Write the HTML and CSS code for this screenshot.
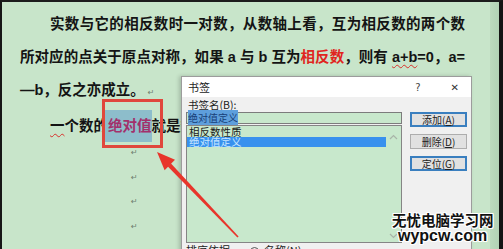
FILE: index.html
```html
<!DOCTYPE html>
<html lang="zh-CN">
<head>
    <meta charset="UTF-8">
    <title>书签</title>
    <link rel="stylesheet" href="styles.css">
</head>
<body>
    <div class="screen">
        <div class="page">
            <div class="doc">
                <p class="line first full">实数与它的相反数时一对数，从数轴上看，互为相反数的两个数</p>
                <p class="line full">所对应的点关于原点对称，如果 a 与 b 互为<span class="red">相反数</span>，则有 <span class="wavy">a+b</span>=0，a=</p>
                <p class="line">—b，反之亦成立。<span class="mark">↵</span></p>
                <p class="line first second"><span class="wavy">一</span>个数的<span class="sel">绝对值</span>就是数轴上表示这个数的点到原点的距离。</p>
                <p class="empty">↵</p>
                <p class="empty">↵</p>
                <p class="empty">↵</p>
                <p class="empty">↵</p>
            </div>
            <div class="edge"></div>
        </div>

        <!-- 红框标注 -->
        <div class="frame"></div>

        <!-- 书签对话框 -->
        <div class="dialog">
            <div class="title">
                <span class="title-text">书签</span>
                <span class="help">?</span>
                <span class="close">✕</span>
            </div>
            <div class="dialog-body">
                <div class="left">
                    <div class="label">书签名(<u>B</u>):</div>
                    <div class="input"><span class="input-sel">绝对值定义</span></div>
                    <div class="list">
                        <div class="items">
                            <div class="item">相反数性质</div>
                            <div class="item active">绝对值定义</div>
                        </div>
                        <div class="scroll">
                            <svg width="9" height="6" viewBox="0 0 9 6"><path d="M1 5 L4.5 1.5 L8 5" fill="none" stroke="#a8b4a8" stroke-width="1.2"/></svg>
                            <svg width="9" height="6" viewBox="0 0 9 6"><path d="M1 1 L4.5 4.5 L8 1" fill="none" stroke="#a8b4a8" stroke-width="1.2"/></svg>
                        </div>
                    </div>
                    <div class="sort">排序依据: <span class="radio"></span> 名称(<u>N</u>)</div>
                </div>
                <div class="buttons">
                    <button class="btn focus">添加(<u>A</u>)</button>
                    <button class="btn">删除(<u>D</u>)</button>
                    <button class="btn focus">定位(<u>G</u>)</button>
                </div>
            </div>
        </div>

        <!-- 红色箭头 -->
        <svg class="arrow" width="503" height="249" viewBox="0 0 503 249">
            <polygon points="237.4,237.6 238.6,236.4 171,163.4 167.8,166.6" fill="#e8352b"/>
            <polygon points="157,152 175,159.8 164.6,170.2" fill="#e8352b"/>
        </svg>

        <div class="watermark">
            <div class="wm-cn">无忧电脑学习网</div>
            <div class="wm-en">wypcw.com</div>
        </div>
    </div>
</body>
</html>
```

FILE: styles.css
```css
* {
    margin: 0;
    padding: 0;
    box-sizing: border-box;
}

body {
    width: 503px;
    height: 249px;
    overflow: hidden;
    background: #111;
    font-family: "Noto Sans CJK SC", sans-serif;
}

.screen {
    position: relative;
    width: 503px;
    height: 249px;
    overflow: hidden;
    border-left: 2px solid #161616;
    border-top: 2px solid #1c1c1c;
    border-right: 4px solid #141414;
}

.page {
    display: flex;
    height: 100%;
}

.doc {
    width: 488px;
    height: 100%;
    background: #c8e5ca;
    padding: 6px 25px 0 18px;
    color: #141414;
    font-size: 14.5px;
    font-weight: bold;
    font-family: "Liberation Sans", "Noto Sans CJK SC", sans-serif;
}

.edge {
    flex: 1;
    background: linear-gradient(90deg, #bcdabe, #b2d2b5);
}

.line {
    height: 33px;
    line-height: 33px;
    white-space: nowrap;
}

.first {
    text-indent: 30px;
}

.full {
    text-align: justify;
    text-align-last: justify;
}

.second {
    margin-top: 4px;
    height: 30px;
    line-height: 30px;
}

.red {
    color: #e0261e;
}

.wavy {
    text-decoration: underline wavy #d8302a;
    text-decoration-thickness: 1px;
    text-underline-offset: 2px;
}

.sel {
    color: #a3306b;
    background: #8dbdcb;
    padding: 8px 0 8px 3px;
    margin-left: -3px;
}

.mark {
    font-family: "DejaVu Sans", sans-serif;
    font-size: 8px;
    font-weight: normal;
    color: #6f7f70;
    margin-left: 3px;
}

.empty {
    height: 24.5px;
    line-height: 24.5px;
    padding-left: 111px;
    font-family: "DejaVu Sans", sans-serif;
    font-size: 8px;
    font-weight: normal;
    color: #6f7f70;
}

.frame {
    position: absolute;
    left: 100px;
    top: 97px;
    width: 61px;
    height: 49px;
    border: 3px solid #e0473c;
}

.dialog {
    position: absolute;
    left: 179px;
    top: 74px;
    width: 291px;
    height: 190px;
    background: #f0f0f0;
    border: 1px solid #9c9c9c;
    box-shadow: -2px 0 4px rgba(0, 0, 0, 0.18);
    font-size: 11px;
    color: #222;
}

.title {
    height: 20px;
    background: #fff;
    display: flex;
    align-items: center;
    padding: 0 12px 0 6px;
}

.title-text {
    flex: 1;
}

.help {
    margin-right: 30px;
    font-family: "DejaVu Sans", sans-serif;
    font-size: 10px;
    color: #444;
}

.close {
    font-family: "DejaVu Sans", sans-serif;
    font-size: 10px;
    color: #333;
}

.dialog-body {
    display: grid;
    grid-template-columns: 216px 57px;
    column-gap: 8px;
    padding: 0 4px;
}

.label {
    height: 15px;
    line-height: 15px;
    padding-left: 2px;
    font-size: 10.5px;
}

.input {
    height: 12px;
    border: 1px solid #7c7c7c;
    background: #c8e8cc;
    padding-left: 1px;
    font-size: 10px;
    line-height: 10px;
}

.input-sel {
    background: #5e9fdc;
    color: #173e78;
}

.list {
    display: flex;
    margin-top: 1px;
    height: 118px;
    border: 1px solid #858585;
    background: #c8e8cc;
}

.items {
    flex: 1;
    padding-top: 1px;
}

.item {
    height: 10px;
    line-height: 10px;
    font-size: 10.5px;
    padding-left: 2px;
    color: #1a1a1a;
}

.item.active {
    background: #3891ee;
    color: #c8e6ff;
}

.scroll {
    width: 15px;
    display: flex;
    flex-direction: column;
    justify-content: space-between;
    align-items: center;
    padding: 8px 0 3px;
}

.sort {
    height: 12px;
    line-height: 12px;
    margin-top: 1px;
    font-size: 11px;
}

.radio {
    display: inline-block;
    width: 9px;
    height: 9px;
    border: 1px solid #555;
    border-radius: 50%;
    margin: 0 3px 0 14px;
    vertical-align: -1px;
}

.buttons {
    display: flex;
    flex-direction: column;
    gap: 7px;
    padding-top: 15px;
}

.btn {
    height: 15px;
    border: 1px solid #adadad;
    background: #e1e1e1;
    font-family: "Noto Sans CJK SC", sans-serif;
    font-size: 10px;
    line-height: 12px;
    color: #222;
}

.btn.focus {
    border: 2px solid #3a7fbf;
}

.arrow {
    position: absolute;
    left: -2px;
    top: -2px;
}

.watermark {
    position: absolute;
    left: 390px;
    top: 209px;
    color: #111;
    font-weight: bold;
    text-shadow: 1px 0 #fff, -1px 0 #fff, 0 1px #fff, 0 -1px #fff, 1px 1px #fff, -1px -1px #fff, 1px -1px #fff, -1px 1px #fff;
}

.wm-cn {
    font-size: 14.5px;
    line-height: 18px;
    font-family: "Noto Sans CJK SC", sans-serif;
}

.wm-en {
    font-size: 16px;
    line-height: 14px;
    padding-left: 6px;
    font-family: "Liberation Sans", sans-serif;
}
```
